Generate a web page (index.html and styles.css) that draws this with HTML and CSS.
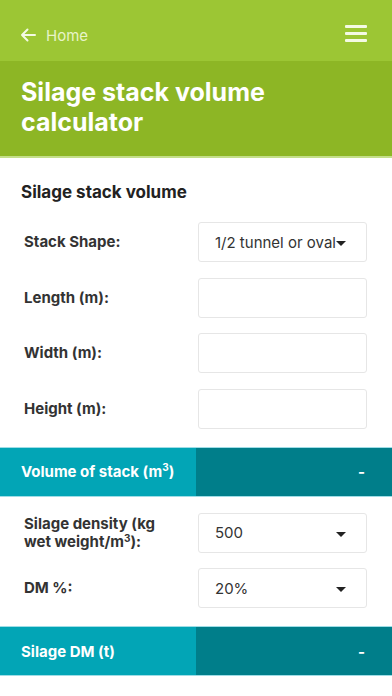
FILE: index.html
```html
<!DOCTYPE html>
<html lang="en">
<head>
    <meta charset="UTF-8">
    <meta name="viewport" content="width=device-width, initial-scale=1.0">
    <title>Silage stack volume calculator</title>
    <link rel="stylesheet" href="styles.css">
</head>
<body>

<div class="top-nav">
    <a class="back-link" href="#">
        <svg class="back-icon" width="16" height="14" viewBox="0 0 16 14">
            <path d="M15 7H2M7.5 1.5L2 7l5.5 5.5" fill="none" stroke="currentColor" stroke-width="2" stroke-linecap="round" stroke-linejoin="round"/>
        </svg>
        <span>Home</span>
    </a>
    <div class="menu-btn">
        <span></span><span></span><span></span>
    </div>
</div>

<div class="title-band">
    <h1>Silage stack volume calculator</h1>
</div>

<div class="section">
    <h2>Silage stack volume</h2>
    <div class="form-row">
        <label>Stack Shape:</label>
        <div class="field select">1/2 tunnel or oval<i class="caret"></i></div>
    </div>
    <div class="form-row">
        <label>Length (m):</label>
        <div class="field"></div>
    </div>
    <div class="form-row">
        <label>Width (m):</label>
        <div class="field"></div>
    </div>
    <div class="form-row">
        <label>Height (m):</label>
        <div class="field"></div>
    </div>
</div>

<div class="result-bar">
    <div class="result-label">Volume of stack (m<sup>3</sup>)</div>
    <div class="result-value">-</div>
</div>

<div class="section small">
    <div class="form-row">
        <label>Silage density (kg wet weight/m<sup>3</sup>):</label>
        <div class="field select">500<i class="caret"></i></div>
    </div>
    <div class="form-row">
        <label>DM %:</label>
        <div class="field select">20%<i class="caret"></i></div>
    </div>
</div>

<div class="result-bar">
    <div class="result-label">Silage DM (t)</div>
    <div class="result-value">-</div>
</div>

</body>
</html>
```

FILE: styles.css
```css
body {
    font-family: Inter, "Open Sans", sans-serif;
    margin: 0;
    background-color: #fff;
    color: #333;
}
.top-nav {
    height: 61px;
    background-color: #9cc634;
    display: flex;
    justify-content: space-between;
    align-items: center;
    padding: 0 25px 0 20px;
}
.back-link {
    display: flex;
    align-items: center;
    gap: 10px;
    color: #e8f4c8;
    text-decoration: none;
    font-size: 15px;
    padding-top: 9px;
}
.back-icon {
    color: #f4fae4;
}
.menu-btn {
    display: flex;
    flex-direction: column;
    gap: 4.5px;
    width: 22px;
    padding-top: 6px;
}
.menu-btn span {
    height: 2.5px;
    background-color: #f4fae4;
    border-radius: 1px;
}
.title-band {
    background-color: #8db625;
    border-bottom: 2px solid #c4df8a;
    padding: 16px 21px 19px;
}
.title-band h1 {
    margin: 0;
    max-width: 290px;
    color: #fff;
    font-size: 25px;
    line-height: 30px;
    font-weight: 700;
}
.section {
    padding: 24px 25px 18px 21px;
}
.section.small {
    padding-top: 16px;
}
.section h2 {
    margin: 0 0 20px;
    font-size: 17px;
    font-weight: 700;
    color: #222;
}
.form-row {
    display: flex;
    align-items: center;
    margin-top: 15.5px;
}
.form-row:first-of-type {
    margin-top: 0;
}
.form-row label {
    flex: 1;
    padding-left: 3px;
    font-size: 15px;
    font-weight: 700;
    line-height: 18px;
    padding-right: 16px;
}
.form-row label sup,
.result-label sup {
    font-size: 10px;
    line-height: 0;
    vertical-align: baseline;
    position: relative;
    top: -5px;
}
.field {
    position: relative;
    width: 169px;
    height: 40px;
    box-sizing: border-box;
    border: 1px solid #e6e6e6;
    border-radius: 3px;
    padding: 0 16px;
    display: flex;
    align-items: center;
    font-size: 15px;
    white-space: nowrap;
}
.caret {
    position: absolute;
    right: 20px;
    top: 18px;
    border-left: 5px solid transparent;
    border-right: 5px solid transparent;
    border-top: 5px solid #222;
}
.result-bar {
    display: flex;
    height: 50px;
    box-sizing: border-box;
    border-top: 1px solid #9fdde6;
    border-bottom: 1px solid #9fdde6;
    color: #fff;
    font-weight: 700;
    font-size: 15px;
}
.result-label {
    width: 175px;
    background-color: #02a5b6;
    display: flex;
    align-items: center;
    padding-left: 21px;
}
.result-value {
    flex: 1;
    background-color: #007e8a;
    display: flex;
    align-items: center;
    justify-content: flex-end;
    padding-right: 27px;
}
```
